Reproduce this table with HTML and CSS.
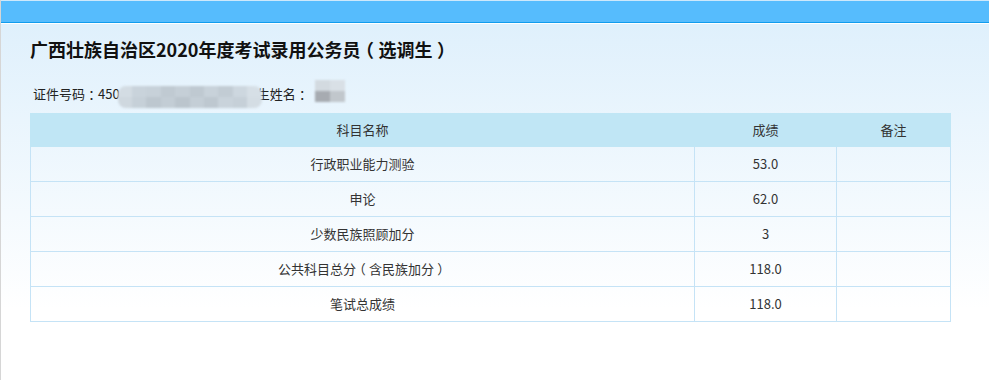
FILE: index.html
```html
<!DOCTYPE html>
<html lang="zh-CN">
<head>
<meta charset="utf-8">
<title>成绩查询</title>
<link rel="stylesheet" href="styles.css">
</head>
<body>
<div class="page">
  <div class="topbar"></div>
  <div class="panel">
    <h1 class="title">广西壮族自治区2020年度考试录用公务员<span class="fw">（</span>选调生<span class="fw">）</span></h1>
    <div class="info">
      <span>证件号码<span class="fw">：</span>450</span><span class="mosaic mosaic-id"><i></i><i></i><i></i><i></i><i></i><i></i><i></i><i></i><i></i><i></i><i></i><i></i><i></i><i></i><i></i><i></i><i></i><i></i><i></i><i></i></span><span class="label-name">考生姓名<span class="fw">：</span></span><span class="mosaic mosaic-name"><i></i><i></i><i></i><i></i></span>
    </div>
    <table class="scores">
      <colgroup>
        <col class="c-name">
        <col class="c-score">
        <col class="c-note">
      </colgroup>
      <thead>
        <tr><th>科目名称</th><th>成绩</th><th>备注</th></tr>
      </thead>
      <tbody>
        <tr><td>行政职业能力测验</td><td>53.0</td><td></td></tr>
        <tr><td>申论</td><td>62.0</td><td></td></tr>
        <tr><td>少数民族照顾加分</td><td>3</td><td></td></tr>
        <tr><td>公共科目总分<span class="fw">（</span>含民族加分<span class="fw">）</span></td><td>118.0</td><td></td></tr>
        <tr><td>笔试总成绩</td><td>118.0</td><td></td></tr>
      </tbody>
    </table>
  </div>
</div>
</body>
</html>
```

FILE: styles.css
```css
* { box-sizing: border-box; }
html, body { margin: 0; padding: 0; background: #fff; }
body {
  font-family: "Noto Sans CJK SC", "Noto Sans", sans-serif;
  color: #333;
  font-size: 13px;
}
.page {
  width: 989px;
  height: 380px;
  border-left: 1px solid #d6d6d6;
  background: #fff;
}
.topbar {
  height: 23px;
  background: #56bcfd;
  border-top: 1px solid #cde8fb;
  border-bottom: 1px solid #129ced;
}
.panel {
  border-top: 1px solid #fff;
  height: 356px;
  padding: 13px 0 0 29px;
  background: linear-gradient(to bottom, #dff0fc 0px, #fff 285px, #fff 100%);
}
.fw {
  display: inline-block;
  width: 1em;
  text-align: center;
  font-feature-settings: "halt";
}
.title {
  margin: 0;
  font-size: 18px;
  line-height: 24px;
  font-weight: bold;
  color: #111;
}
.info {
  margin-top: 23px;
  height: 20px;
  line-height: 20px;
  padding-left: 3px;
  display: flex;
  align-items: center;
  color: #222;
  white-space: nowrap;
}
.mosaic {
  display: inline-grid;
  position: relative;
  z-index: 1;
  filter: blur(1.2px);
}
.mosaic i { display: block; }
.mosaic-id {
  width: 144px;
  height: 22px;
  margin: 6px -18px 0 -2px;
  grid-template-columns: repeat(10, 1fr);
  grid-template-rows: repeat(2, 1fr);
  border-radius: 8px;
  overflow: hidden;
}
.mosaic-id i:nth-child(1) { background: #d3dce3; }
.mosaic-id i:nth-child(2) { background: #c9d3db; }
.mosaic-id i:nth-child(3) { background: #c7d1d9; }
.mosaic-id i:nth-child(4) { background: #c0cad2; }
.mosaic-id i:nth-child(5) { background: #c5cfd7; }
.mosaic-id i:nth-child(6) { background: #bfc9d1; }
.mosaic-id i:nth-child(7) { background: #c8d2da; }
.mosaic-id i:nth-child(8) { background: #c2ccd4; }
.mosaic-id i:nth-child(9) { background: #cdd7df; }
.mosaic-id i:nth-child(10) { background: #d6dfe6; }
.mosaic-id i:nth-child(11) { background: #cfd8df; }
.mosaic-id i:nth-child(12) { background: #c6d0d8; }
.mosaic-id i:nth-child(13) { background: #bdc7cf; }
.mosaic-id i:nth-child(14) { background: #c3cdd5; }
.mosaic-id i:nth-child(15) { background: #bbc5cd; }
.mosaic-id i:nth-child(16) { background: #c4ced6; }
.mosaic-id i:nth-child(17) { background: #bec8d0; }
.mosaic-id i:nth-child(18) { background: #c9d3db; }
.mosaic-id i:nth-child(19) { background: #c6d0d8; }
.mosaic-id i:nth-child(20) { background: #d4dde4; }
.mosaic-name {
  width: 30px;
  height: 22px;
  margin: -6px 0 0 6px;
  grid-template-columns: repeat(2, 1fr);
  grid-template-rows: repeat(2, 1fr);
}
.mosaic-name i:nth-child(1) { background: #d3dae0; }
.mosaic-name i:nth-child(2) { background: #d9e0e6; }
.mosaic-name i:nth-child(3) { background: #a7abb1; }
.mosaic-name i:nth-child(4) { background: #c1c7cc; }

.scores {
  margin-top: 9px;
  width: 920px;
  border-collapse: collapse;
  table-layout: fixed;
}
.c-name { width: 664px; }
.c-score { width: 142px; }
.c-note { width: 114px; }
.scores th {
  background: #c0e6f5;
  border: 1px solid #c0e6f5;
  height: 33px;
  font-weight: normal;
  color: #333;
  text-align: center;
  vertical-align: middle;
  padding: 0;
  line-height: 20px;
}
.scores td {
  border: 1px solid #c5e3f6;
  height: 35px;
  text-align: center;
  vertical-align: middle;
  padding: 0;
  line-height: 20px;
  color: #333;
}
```
